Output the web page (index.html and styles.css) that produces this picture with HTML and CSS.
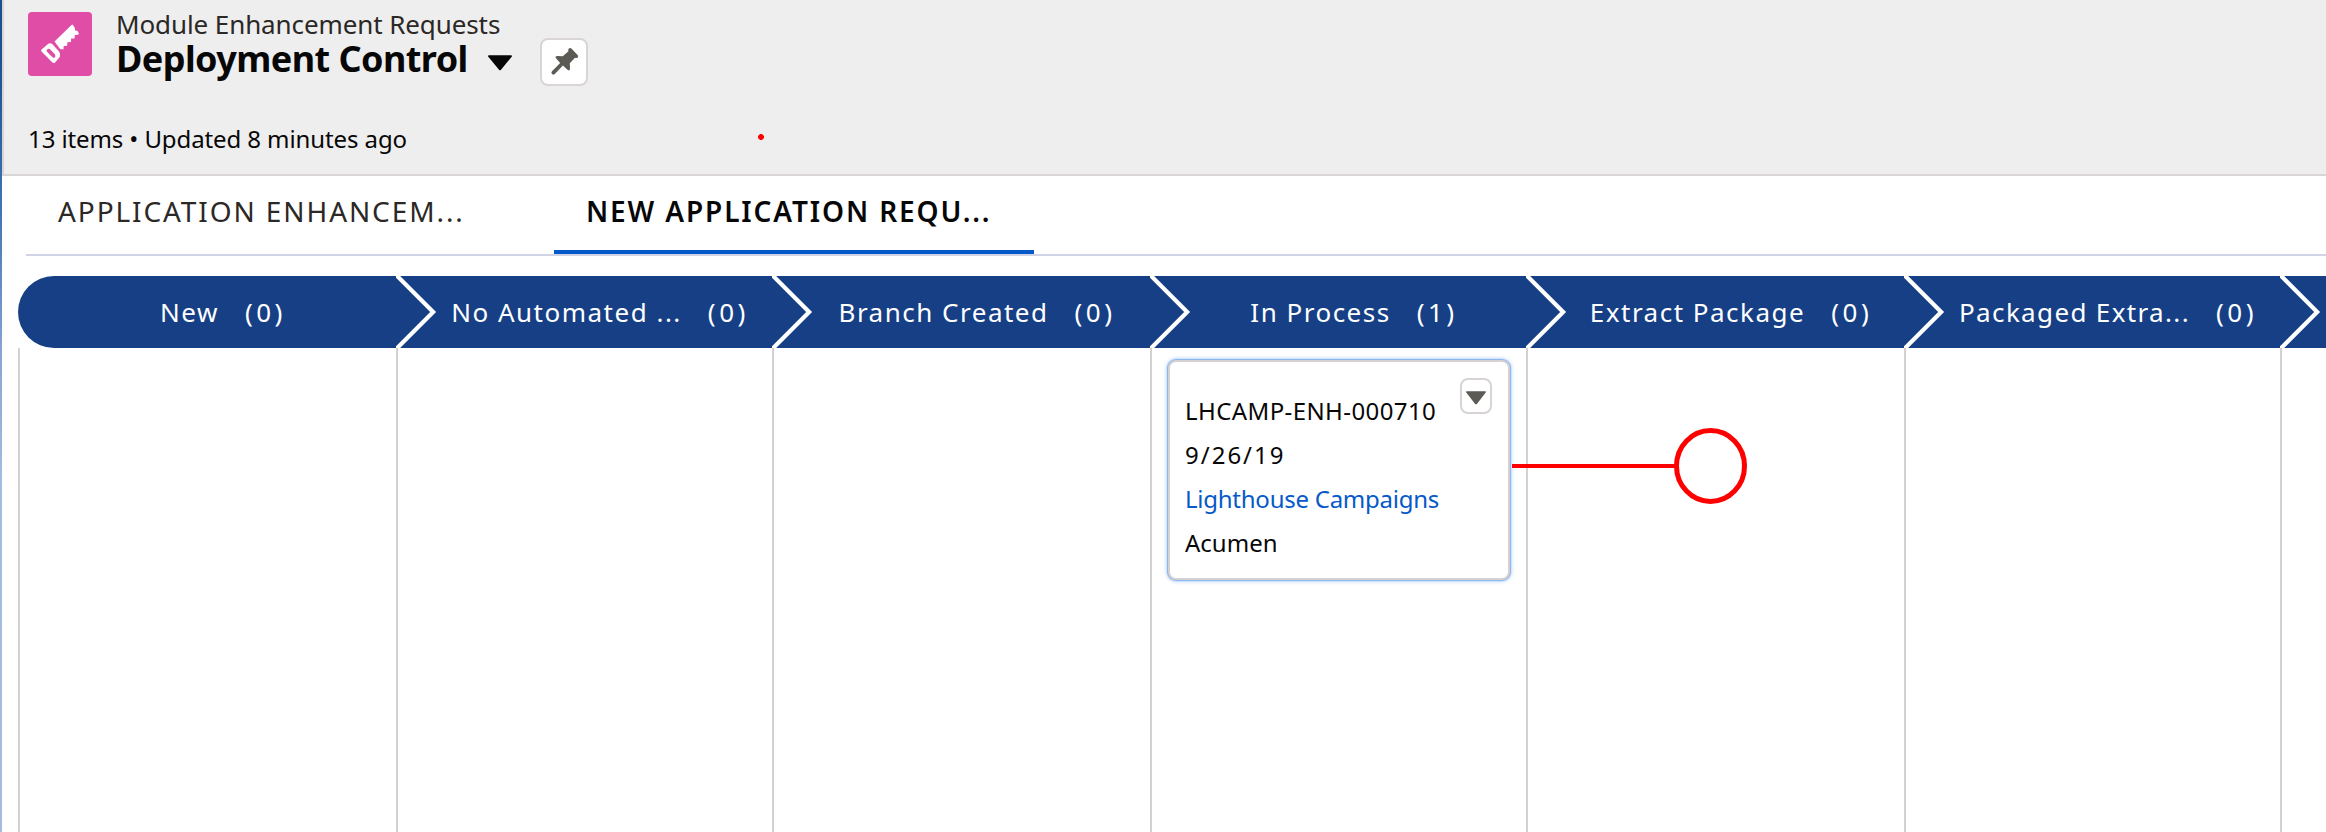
FILE: index.html
```
<!DOCTYPE html>
<html lang="en">
<head>
<meta charset="utf-8">
<title>Deployment Control</title>
<link rel="stylesheet" href="styles.css">
</head>
<body>
<svg class="defs" width="0" height="0">
  <symbol id="chevron" viewBox="0 0 42 72"><path d="M-2.830-4 37.170 36-2.830 76" fill="none" stroke="#fff" stroke-width="4.200"/></symbol>
</svg>
<div class="app">
  <div class="edge"></div>
  <main class="page">
    <header class="page-header">
      <div class="heading">
        <svg class="object-icon" viewBox="0 0 64 64" width="64" height="64">
          <rect width="64" height="64" rx="4" fill="#df4da6"/>
          <path d="M26.5 29.5 43.5 13q.8-.8 1.5 0l2 3.200 0 2.200 2.300.3 1.700 3-1 1-3.200.2-.2 3.500-3.500.2-.2 3.500-3.500.2-.2 3.500-3.500.2-.2 3.300h-3.200Z" fill="#fff"/>
          <path fill-rule="evenodd" d="M13.600 37.400 20.300 31.700q2-1.200 4 .4L31 39.500q1.600 2.200.9 5.200l-4.800 5.700q-1.300 1.300-2.600 0L13.500 39.400q-.8-1 .1-2ZM19.600 37.100q-1.600 1.400-.4 2.900l5.600 5.600q1.400.7 2.300-.6.800-1.400-.3-2.800l-5-5.100q-1.200-.9-2.200 0Z" fill="#fff"/>
        </svg>
        <div class="titles">
          <div class="object-name">Module Enhancement Requests</div>
          <h1 class="list-name">
            <span>Deployment Control</span>
            <svg class="caret" viewBox="0 0 24 16" width="24" height="16"><path d="M1 .3h22q1.500.2.7 1.500L13 14.800q-1 1-2 0L.3 1.800Q-.5.500 1 .3Z" fill="#080707"/></svg>
          </h1>
        </div>
        <button class="pin" aria-label="Pin this list view">
          <svg viewBox="0 0 44 44" width="44" height="44"><path d="M26.800 8.600q1.300-1.300 2.600 0l6.200 6.300q1.200 1.300 0 2.600-1.200 1-2.600.2l-5.200 5.500.2 5q0 3-2.200 1.900l-4.900-4.600-8.100 8.400q-1.500 1.300-2.800.1-1.300-1.400 0-2.800l8.200-8.300-4.400-4.800q-1-2.100 1.800-2.200l5.200.3 5.600-5q-.6-1.500.4-2.600Z" fill="#5c5a55"/></svg>
        </button>
      </div>
      <p class="meta">13 items • Updated 8 minutes ago</p>
    </header>

    <nav class="tabs">
      <a class="tab">APPLICATION ENHANCEM...</a>
      <a class="tab tab-active">NEW APPLICATION REQU...</a>
    </nav>

    <section class="board">
      <div class="column column-first">
        <div class="stage"><span class="label">New</span><span class="count">(0)</span></div>
        <div class="lane"></div>
      </div>
      <div class="column">
        <div class="stage"><svg class="chevron"><use href="#chevron"/></svg><span class="label">No Automated ...</span><span class="count">(0)</span></div>
        <div class="lane"></div>
      </div>
      <div class="column">
        <div class="stage"><svg class="chevron"><use href="#chevron"/></svg><span class="label">Branch Created</span><span class="count">(0)</span></div>
        <div class="lane"></div>
      </div>
      <div class="column">
        <div class="stage"><svg class="chevron"><use href="#chevron"/></svg><span class="label">In Process</span><span class="count">(1)</span></div>
        <div class="lane">
          <article class="card">
            <div class="fields">
              <div class="record-name">LHCAMP-ENH-000710</div>
              <div class="record-date">9/26/19</div>
              <a class="record-link">Lighthouse Campaigns</a>
              <div>Acumen</div>
            </div>
            <button class="menu" aria-label="Show actions">
              <svg viewBox="0 0 20 14" width="20" height="14"><path d="M.6.200h18.800q.8.300.3 1.200l-8.800 11.500q-.9.900-1.800 0L.3 1.400Q-.2.500.6.200Z" fill="#5c5a55"/></svg>
            </button>
          </article>
          <svg class="pointer" viewBox="0 0 236 76" width="236" height="76">
            <path d="M0 38H164" stroke="#f00" stroke-width="4"/>
            <ellipse cx="198.500" cy="38" rx="34" ry="35.500" fill="none" stroke="#f00" stroke-width="5"/>
          </svg>
        </div>
      </div>
      <div class="column">
        <div class="stage"><svg class="chevron"><use href="#chevron"/></svg><span class="label">Extract Package</span><span class="count">(0)</span></div>
        <div class="lane"></div>
      </div>
      <div class="column">
        <div class="stage"><svg class="chevron"><use href="#chevron"/></svg><span class="label label-tight">Packaged Extra...</span><span class="count">(0)</span></div>
        <div class="lane"></div>
      </div>
      <div class="column">
        <div class="stage"><svg class="chevron"><use href="#chevron"/></svg></div>
        <div class="lane"></div>
      </div>
    </section>
  </main>
  <svg class="dot" viewBox="0 0 6 6" width="6" height="6"><path d="M2 0h2l2 2v2L4 6H2L0 4V2Z" fill="#f00"/></svg>
</div>
</body>
</html>
```
FILE: styles.css
```
* { box-sizing: border-box; }

body {
  margin: 0;
  background: #fff;
  color: #080707;
  font-family: "Noto Sans", "Open Sans", sans-serif;
}

.defs { display: none; }

.app {
  position: relative;
  display: flex;
  width: 100%;
  height: 832px;
  overflow: hidden;
}

.edge {
  flex: 0 0 2px;
  background: linear-gradient(#1b4f93 0, #1d5297 60px, #4273b2 210px, #89a7d3 360px, #a3bbde 480px, #a6bcdf 100%);
}

.page {
  flex: 1;
  min-width: 0;
  display: flex;
  flex-direction: column;
}

.page-header {
  height: 176px;
  padding: 6px 0 0 24px;
  background: #eee;
  border-left: 2px solid #d9d4d5;
  border-bottom: 2px solid #d9d4d5;
}

.heading { display: flex; height: 115px; }
.object-icon { margin-top: 6px; }
.titles { margin-left: 24px; }

.object-name {
  padding-top: 1px;
  font-size: 26px;
  line-height: 35px;
  letter-spacing: -0.1px;
  color: #2b2826;
}

.list-name {
  display: flex;
  margin: 0;
  font-size: 36px;
  font-weight: 700;
  line-height: 34px;
  letter-spacing: -0.560px;
}

.caret { margin: 13px 0 0 20px; }

.pin {
  width: 48px;
  height: 48px;
  margin: 32px 0 0 28px;
  padding: 0;
  border: 2px solid #d9d4d5;
  border-radius: 8px;
  background: #fff;
}

.pin svg, .menu svg { display: block; }

.meta {
  margin: 0;
  font-size: 24px;
  line-height: 35px;
  letter-spacing: -0.1px;
}

.tabs {
  display: flex;
  gap: 48px;
  height: 80px;
  margin-left: 24px;
  border-bottom: 2px solid #d0d4e4;
}

.tab {
  width: 480px;
  height: 78px;
  padding-left: 32px;
  font-size: 28px;
  line-height: 70px;
  letter-spacing: 1.9px;
  white-space: nowrap;
  color: #2b2826;
}

.tab-active {
  border-bottom: 4px solid #0659c9;
  font-weight: 600;
  letter-spacing: 1.87px;
  color: #080707;
}

.board {
  flex: 1;
  display: grid;
  grid-template-columns: 378px 376px 378px 376px 378px 376px 378px;
  margin: 20px 0 0 16px;
}

.column {
  display: flex;
  flex-direction: column;
}

.stage {
  position: relative;
  display: flex;
  justify-content: center;
  height: 72px;
  padding-left: 32px;
  overflow: hidden;
  background: #163f85;
  color: #fff;
  font-size: 26px;
  line-height: 72px;
  white-space: nowrap;
}

.column-first .stage { border-radius: 36px 0 0 36px; }

.label { letter-spacing: 1.5px; }
.label-tight { letter-spacing: 1.35px; }
.count { margin-left: 26px; letter-spacing: 3.5px; }

.chevron {
  position: absolute;
  left: 0;
  top: 0;
  width: 42px;
  height: 72px;
}

.lane {
  position: relative;
  flex: 1;
  padding: 12px 16px 0;
  border-left: 2px solid #d5d1d1;
}

.card {
  display: flex;
  justify-content: space-between;
  width: 342px;
  height: 220px;
  padding: 16px 16px 0 15px;
  border: 2px solid #d6d2d2;
  border-radius: 8px;
  background: #fff;
  box-shadow: 0 0 1px 1px #85b2ef, 0 0 4px 1px #a9c9f5;
}

.fields {
  padding-top: 11px;
  font-size: 24px;
  line-height: 44px;
  white-space: nowrap;
}

.record-name { letter-spacing: 0.4px; }
.record-date { letter-spacing: 2px; }
.record-link { display: block; letter-spacing: -0.25px; color: #0659c9; }

.menu {
  display: flex;
  justify-content: center;
  align-items: flex-start;
  width: 32px;
  height: 36px;
  padding: 0;
  border: 2px solid #d8d4d4;
  border-radius: 8px;
  background: #fff;
}

.menu svg { margin-top: 11px; }

.pointer {
  position: absolute;
  z-index: 2;
  left: 360px;
  top: 80px;
}

.dot {
  position: absolute;
  left: 758px;
  top: 134px;
}
```
